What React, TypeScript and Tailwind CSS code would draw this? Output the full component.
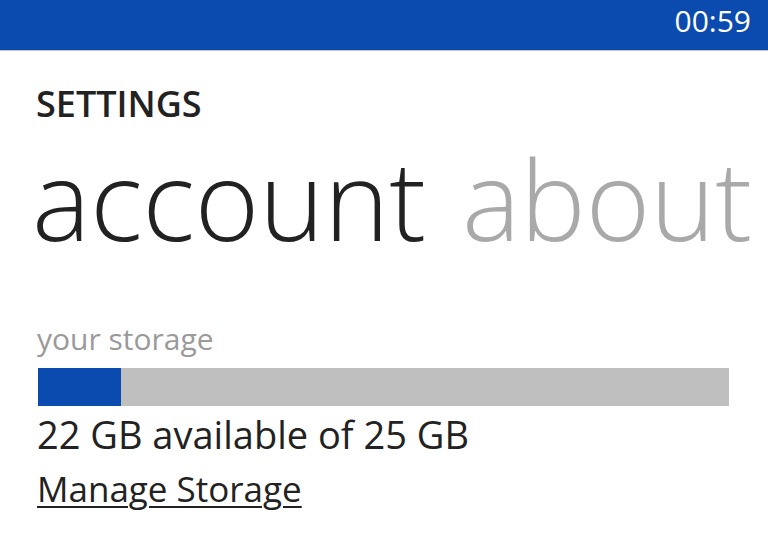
export default function App() {
  const used = 12 // percent of storage in use

  return (
    <div className="w-[768px] h-[538px] bg-white overflow-hidden" style={{ fontFamily: '"Open Sans", "Noto Sans", sans-serif' }}>
      {/* status bar */}
      <div className="h-[51px] bg-[#0b4aaf] border-b border-[#c4c4c4] flex justify-end items-start pt-[6px] pr-[17px]">
        <span className="text-[30px] leading-none text-white">00:59</span>
      </div>

      <div className="pl-[38px]">
        <div className="mt-[35px] -ml-[2px] text-[36px] leading-none font-semibold text-[#222]">SETTINGS</div>

        {/* pivot headers */}
        <div className="mt-[21px] -ml-[6px] flex gap-[36px] text-[110px] leading-none font-light whitespace-nowrap">
          <span className="text-[#222]">account</span>
          <span className="text-[#a9a9a9]">about</span>
        </div>

        <div className="mt-[71px] -ml-[1px] text-[30px] leading-none text-[#9a9a9a]">your storage</div>

        <div className="mt-[14px] w-[691px] h-[38px] bg-[#bfbfbf] flex">
          <div className="h-full bg-[#0b4aaf]" style={{ width: `${used}%` }} />
        </div>

        <div className="mt-[9px] -ml-[1px] text-[38px] leading-none text-[#222]">22 GB available of 25 GB</div>

        <div className="mt-[18px] -ml-[1px] text-[35px] leading-none text-[#222] underline underline-offset-[4px] decoration-2">
          Manage Storage
        </div>
      </div>
    </div>
  )
}
